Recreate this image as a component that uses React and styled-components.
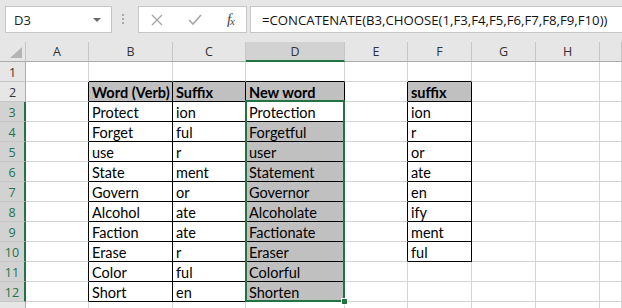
import React from 'react';
import styled, { createGlobalStyle } from 'styled-components';

const GlobalStyle = createGlobalStyle`
    body {
        margin: 0;
        background: #ffffff;
        font-family: 'Lato', 'Open Sans', sans-serif;
    }
`;

const GREEN = '#217346';
const GRID = '#d4d4d4';
const INK = '#000000';
const FILL = '#c0c0c0';

const Window = styled.div`
    width: 622px;
    height: 308px;
    overflow: hidden;
    background: #ffffff;
`;

const FormulaBar = styled.div`
    display: flex;
    align-items: flex-start;
    height: 42px;
    padding: 6px 0 0 5px;
    box-sizing: border-box;
    background: #e6e6e6;
`;

const Box = styled.div`
    display: flex;
    align-items: center;
    box-sizing: border-box;
    height: 27px;
    background: #ffffff;
    border: 1px solid #c6c6c6;
`;

const NameBox = styled(Box)`
    width: 107px;
    padding: 0 10px 0 8px;
    justify-content: space-between;
    font-family: 'Open Sans', sans-serif;
    font-size: 13px;
    color: #222;
`;

const Caret = styled.span`
    width: 0;
    height: 0;
    border-left: 4px solid transparent;
    border-right: 4px solid transparent;
    border-top: 4px solid #6a6a6a;
`;

const Grip = styled.div`
    display: flex;
    flex-direction: column;
    gap: 2px;
    width: 2px;
    margin: 8px 14px 0 10px;

    span {
        width: 2px;
        height: 2px;
        background: #a8a8a8;
    }
`;

const FxBox = styled(Box)`
    width: 109px;
    padding: 0 12px 0 12px;
    justify-content: space-between;
    margin-right: 3px;
`;

const Fx = styled.span`
    font-family: 'Liberation Serif', serif;
    font-style: italic;
    font-size: 15px;
    color: #444;
    letter-spacing: -1px;

    sub {
        font-size: 11px;
        vertical-align: -1px;
    }
`;

const FormulaInput = styled(Box)`
    flex: 1;
    padding-left: 11px;
    border-right: none;
    font-family: 'Open Sans', sans-serif;
    font-size: 13.2px;
    color: #111;
    white-space: nowrap;
`;

const Sheet = styled.div`
    display: grid;
    grid-template-columns: 26px 63px 84px 73px 99px 63px 64px 64px 64px 22px;
    grid-auto-rows: 20px;
`;

const Head = styled.div`
    display: flex;
    align-items: center;
    justify-content: center;
    box-sizing: border-box;
    background: ${p => (p.$active ? '#d2d2d2' : '#e6e6e6')};
    border-right: 1px solid #c6c6c6;
    border-bottom: 1px solid #ababab;
    font-family: 'Open Sans', sans-serif;
    font-size: 12.5px;
    color: #333;
`;

const ColHead = styled(Head)`
    border-bottom: ${p => (p.$active ? `2px solid ${GREEN}` : '1px solid #ababab')};
    padding-top: ${p => (p.$active ? '1px' : '0')};
`;

const Corner = styled(Head)`
    position: relative;

    &::after {
        content: '';
        position: absolute;
        right: 3px;
        bottom: 3px;
        border-left: 12px solid transparent;
        border-bottom: 11px solid #b4b4b4;
    }
`;

const RowHead = styled(Head)`
    border-bottom: 1px solid #c6c6c6;
    border-right: ${p => (p.$active ? `2px solid ${GREEN}` : '1px solid #ababab')};
    color: ${p => (p.$active ? GREEN : '#333')};
    padding-top: 1px;
`;

const Cell = styled.div`
    position: ${p => (p.$anchor ? 'relative' : 'static')};
    display: flex;
    align-items: center;
    box-sizing: border-box;
    padding: 1px 0 0 3px;
    background: ${p => (p.$fill ? FILL : '#ffffff')};
    border-right: 1px solid ${p => p.$right};
    border-bottom: 1px solid ${p => p.$bottom};
    font-family: 'Lato', sans-serif;
    font-size: 14.5px;
    font-weight: ${p => (p.$bold ? 700 : 400)};
    color: #000;
    white-space: nowrap;
`;

const Selection = styled.div`
    position: absolute;
    top: -2px;
    left: -1px;
    width: 100px;
    height: 202px;
    box-sizing: border-box;
    border: 2px solid ${GREEN};
    pointer-events: none;

    &::after {
        content: '';
        position: absolute;
        right: -5px;
        bottom: -5px;
        width: 5px;
        height: 5px;
        background: ${GREEN};
        border: 1px solid #ffffff;
    }
`;

// the last column only peeks in at the right edge, so it gets no letter
const COLS = ['A', 'B', 'C', 'D', 'E', 'F', 'G', 'H', ''];

const values = {
    B: ['Word (Verb)', 'Protect', 'Forget', 'use', 'State', 'Govern', 'Alcohol', 'Faction', 'Erase', 'Color', 'Short'],
    C: ['Suffix', 'ion', 'ful', 'r', 'ment', 'or', 'ate', 'ate', 'r', 'ful', 'en'],
    D: ['New word', 'Protection', 'Forgetful', 'user', 'Statement', 'Governor', 'Alcoholate', 'Factionate', 'Eraser', 'Colorful', 'Shorten'],
    F: ['suffix', 'ion', 'r', 'or', 'ate', 'en', 'ify', 'ment', 'ful'],
};

const bordered = (row, col) => {
    if (['B', 'C', 'D'].includes(col)) return row >= 2 && row <= 12;
    if (col === 'F') return row >= 2 && row <= 10;
    return false;
};

const textAt = (row, col) => (values[col] ? values[col][row - 2] || '' : '');

const filled = (row, col) => (row === 2 && values[col]) || (col === 'D' && row >= 4 && row <= 12);

// row 13 only peeks in at the bottom edge, its number sits below the fold
const ROWS = Array.from({ length: 13 }, (_, i) => i + 1);

const App = () => (
    <Window>
        <GlobalStyle />
        <FormulaBar>
            <NameBox>
                D3
                <Caret />
            </NameBox>
            <Grip>
                <span />
                <span />
                <span />
            </Grip>
            <FxBox>
                <svg width="12" height="12" viewBox="0 0 12 12">
                    <path d="M1 1 L11 11 M11 1 L1 11" stroke="#a6a6a6" strokeWidth="1.4" fill="none" />
                </svg>
                <svg width="14" height="12" viewBox="0 0 14 12">
                    <path d="M1 6 L5 10 L13 1" stroke="#a6a6a6" strokeWidth="1.6" fill="none" />
                </svg>
                <Fx>
                    f<sub>x</sub>
                </Fx>
            </FxBox>
            <FormulaInput>=CONCATENATE(B3,CHOOSE(1,F3,F4,F5,F6,F7,F8,F9,F10))</FormulaInput>
        </FormulaBar>
        <Sheet>
            <Corner />
            {COLS.map((c, i) => (
                <ColHead key={i} $active={c === 'D'}>
                    {c}
                </ColHead>
            ))}
            {ROWS.map(row => (
                <React.Fragment key={row}>
                    <RowHead $active={row >= 3 && row <= 12}>{row < 13 ? row : ''}</RowHead>
                    {COLS.map((col, i) => {
                        const next = COLS[i + 1];
                        const right = bordered(row, col) || (next && bordered(row, next)) ? INK : GRID;
                        const bottom = bordered(row, col) || bordered(row + 1, col) ? INK : GRID;
                        const anchor = row === 3 && col === 'D';
                        return (
                            <Cell
                                key={i}
                                $right={right}
                                $bottom={bottom}
                                $fill={filled(row, col)}
                                $bold={row === 2}
                                $anchor={anchor}
                            >
                                {textAt(row, col)}
                                {anchor && <Selection />}
                            </Cell>
                        );
                    })}
                </React.Fragment>
            ))}
        </Sheet>
    </Window>
);

export default App;
